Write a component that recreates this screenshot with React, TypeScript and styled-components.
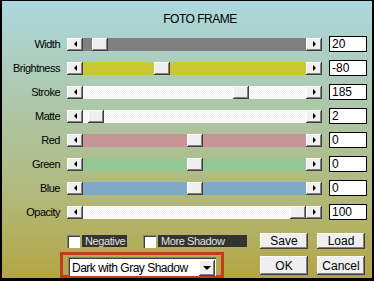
import styled, { createGlobalStyle } from "styled-components";

const GlobalStyle = createGlobalStyle`
  html, body { margin: 0; padding: 0; background: #000; }
  body { font-family: "Liberation Sans", Arial, sans-serif; color: #000; }
`;

type TrackKind = "gray" | "yellow" | "dither" | "red" | "green" | "blue";

const trackBg: Record<TrackKind, string> = {
    gray: "#808080",
    yellow: "#c9c833",
    dither: "repeating-conic-gradient(#ffffff 0 25%, #f1f1f1 0 50%) 0 0 / 2px 2px",
    red: "#c89597",
    green: "#96c896",
    blue: "#80a8c8",
};

const raised = `
    background: #efefef;
    box-shadow: inset -1px -1px #404040, inset 1px 1px #ffffff, inset -2px -2px #808080;
`;

const Window = styled.div`
    width: 374px;
    height: 281px;
    box-sizing: border-box;
    border-style: solid;
    border-color: #000;
    border-width: 1px 2px 3px 2px;
    background: linear-gradient(180deg, #acd8de 0%, #adc8ae 35%, #b1b878 72%, #b4a544 100%);
    overflow: hidden;
    display: flex;
    flex-direction: column;
`;

const Title = styled.div`
    height: 31px;
    box-sizing: border-box;
    padding: 11px 0 0 26px;
    font-size: 12px;
    line-height: 14px;
    letter-spacing: -0.5px;
    text-align: center;
`;

const Row = styled.div`
    height: 24px;
    display: grid;
    grid-template-columns: 58px 255px 38px;
    column-gap: 7px;
    align-items: center;
`;

const Label = styled.span`
    text-align: right;
    font-size: 11px;
    line-height: 13px;
    letter-spacing: -0.5px;
`;

const Slider = styled.div`
    display: flex;
    height: 13px;
`;

const ArrowButton = styled.div<{ $dir: "left" | "right" }>`
    width: 16px;
    flex: none;
    ${raised}
    display: flex;
    align-items: center;
    justify-content: center;
    &::after{
        content: "";
        border-style: solid;
        border-width: ${props => props.$dir === "left" ? "3px 3px 3px 0" : "3px 0 3px 3px"};
        border-color: ${props => props.$dir === "left"
            ? "transparent #000 transparent transparent"
            : "transparent transparent transparent #000"};
        margin: 0 0 1px 1px;
    }
`;

const Track = styled.div<{ $kind: TrackKind }>`
    flex: 1;
    position: relative;
    background: ${props => trackBg[props.$kind]};
`;

const Thumb = styled.div<{ $left: number }>`
    position: absolute;
    top: 0;
    left: ${props => props.$left}px;
    width: 16px;
    height: 100%;
    ${raised}
`;

const ValueBox = styled.div`
    height: 16px;
    box-sizing: border-box;
    border: 1px solid #000;
    background: #fff;
    font-size: 12px;
    line-height: 14px;
    padding-left: 2px;
`;

const Footer = styled.div`
    display: grid;
    grid-template-columns: 186px 105px;
    column-gap: 14px;
    padding: 9px 0 0 58px;
`;

const CheckRow = styled.div`
    height: 16px;
    display: flex;
    align-items: center;
    gap: 16px;
    padding-left: 7px;
`;

const CheckItem = styled.label`
    display: flex;
    align-items: center;
    gap: 2px;
`;

const CheckBox = styled.span`
    width: 13px;
    height: 13px;
    box-sizing: border-box;
    background: #fff;
    box-shadow: inset 1px 1px #808080, inset 2px 2px #404040;
`;

const CheckText = styled.span<{ $width: number }>`
    width: ${props => props.$width}px;
    height: 12px;
    box-sizing: border-box;
    padding-left: 3px;
    background: #333;
    color: #e2e2e2;
    font-size: 11px;
    line-height: 12px;
    letter-spacing: -0.4px;
`;

const ButtonPair = styled.div<{ $top: number }>`
    display: flex;
    gap: 9px;
    margin-top: ${props => props.$top}px;
`;

const Button = styled.div<{ $tall?: boolean }>`
    width: 48px;
    height: ${props => props.$tall ? 19 : 16}px;
    ${raised}
    display: flex;
    align-items: center;
    justify-content: center;
    font-size: 12px;
`;

const Highlight = styled.div`
    margin-top: 3px;
    width: 164px;
    height: 26px;
    box-sizing: border-box;
    border: 3px solid #c33b1f;
    padding: 2px 5px 0;
`;

const Select = styled.div`
    height: 19px;
    box-sizing: border-box;
    background: #fff;
    box-shadow: inset 1px 1px #808080, inset 2px 2px #404040;
    display: flex;
    align-items: center;
    padding: 2px 1px 0 4px;
    font-size: 12px;
    letter-spacing: -0.5px;
`;

const SelectText = styled.span`
    flex: 1;
`;

const SelectArrow = styled.span`
    width: 16px;
    height: 16px;
    ${raised}
    display: flex;
    align-items: center;
    justify-content: center;
    &::after{
        content: "";
        border-style: solid;
        border-width: 4px 4px 0 4px;
        border-color: #000 transparent transparent transparent;
        margin-top: 1px;
    }
`;

const sliders: { label: string; kind: TrackKind; thumb: number; value: string }[] = [
    { label: "Width", kind: "gray", thumb: 9, value: "20" },
    { label: "Brightness", kind: "yellow", thumb: 71, value: "-80" },
    { label: "Stroke", kind: "dither", thumb: 150, value: "185" },
    { label: "Matte", kind: "dither", thumb: 5, value: "2" },
    { label: "Red", kind: "red", thumb: 104, value: "0" },
    { label: "Green", kind: "green", thumb: 104, value: "0" },
    { label: "Blue", kind: "blue", thumb: 104, value: "0" },
    { label: "Opacity", kind: "dither", thumb: 207, value: "100" },
];

const App = () => {
    return (
        <>
            <GlobalStyle />
            <Window>
                <Title>FOTO FRAME</Title>
                {sliders.map(s => (
                    <Row key={s.label}>
                        <Label>{s.label}</Label>
                        <Slider>
                            <ArrowButton $dir="left" />
                            <Track $kind={s.kind}>
                                <Thumb $left={s.thumb} />
                            </Track>
                            <ArrowButton $dir="right" />
                        </Slider>
                        <ValueBox>{s.value}</ValueBox>
                    </Row>
                ))}
                <Footer>
                    <CheckRow>
                        <CheckItem>
                            <CheckBox />
                            <CheckText $width={45}>Negative</CheckText>
                        </CheckItem>
                        <CheckItem>
                            <CheckBox />
                            <CheckText $width={89}>More Shadow</CheckText>
                        </CheckItem>
                    </CheckRow>
                    <ButtonPair $top={0}>
                        <Button>Save</Button>
                        <Button>Load</Button>
                    </ButtonPair>
                    <Highlight>
                        <Select>
                            <SelectText>Dark with Gray Shadow</SelectText>
                            <SelectArrow />
                        </Select>
                    </Highlight>
                    <ButtonPair $top={7}>
                        <Button $tall>OK</Button>
                        <Button $tall>Cancel</Button>
                    </ButtonPair>
                </Footer>
            </Window>
        </>
    );
};

export default App;
